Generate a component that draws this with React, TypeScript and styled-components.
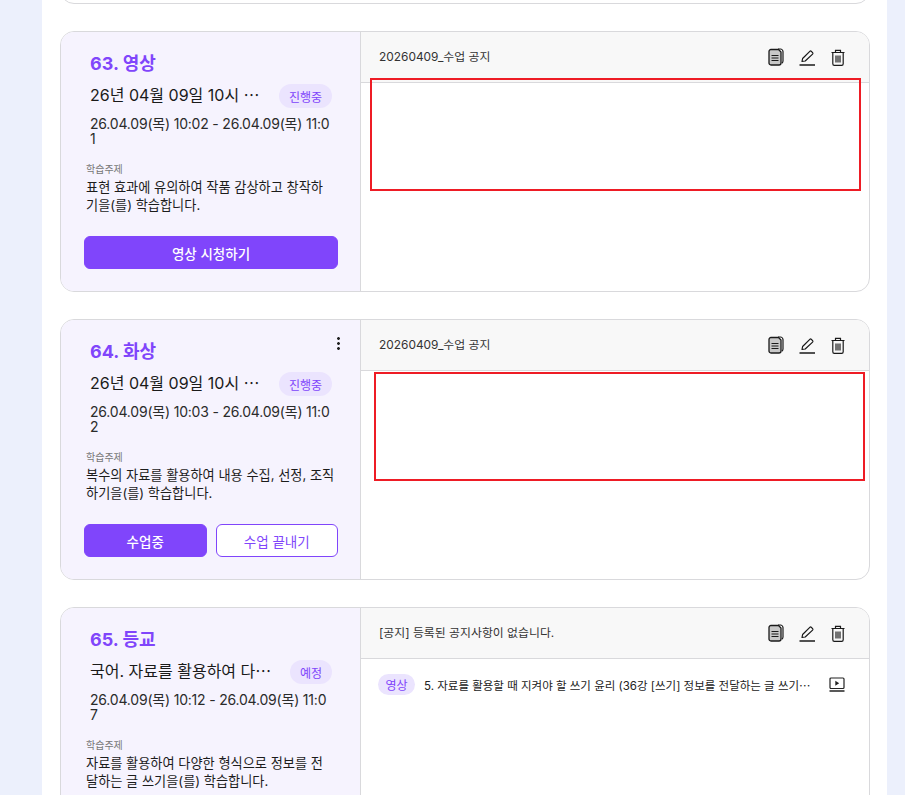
import React from "react";
import styled, { createGlobalStyle } from "styled-components";

const Global = createGlobalStyle`
  html, body {
    margin: 0;
    padding: 0;
    height: 795px;
    overflow: hidden;
    background: #ecf0fc;
    font-family: Inter, "Noto Sans CJK KR", sans-serif;
  }
  * { box-sizing: border-box; }
`;

const Page = styled.main`
  width: 845px;
  height: 795px;
  margin-left: 42px;
  background: #fff;
  padding: 0 18px;
  overflow: hidden;
`;

const List = styled.div`
  display: flex;
  flex-direction: column;
  gap: 27px;
  margin-top: -196px;
`;

const Card = styled.section<{ $h?: number }>`
  position: relative;
  display: grid;
  grid-template-columns: 300px 1fr;
  width: 810px;
  height: ${(p) => p.$h ?? 261}px;
  flex: none;
  border: 1px solid #d9d9dc;
  border-radius: 14px;
  overflow: hidden;
  background: #fff;
`;

const Side = styled.div`
  background: #f6f3fe;
  border-right: 1px solid #d9d9dc;
  padding: 19px 22px 0 23px;
  display: flex;
  flex-direction: column;
`;

const Title = styled.h2`
  margin: 0 0 0 6px;
  font-size: 18px;
  line-height: 26px;
  font-weight: 700;
  color: #8045fb;
`;

const NameRow = styled.div`
  display: flex;
  align-items: center;
  justify-content: space-between;
  margin: 7px 6px 0 6px;
  height: 24px;
`;

const Name = styled.div`
  flex: 1;
  min-width: 0;
  font-size: 16px;
  font-weight: 400;
  color: #1a1a1a;
  white-space: nowrap;
  padding-bottom: 4px;
`;

const Pill = styled.span`
  flex: none;
  display: inline-flex;
  align-items: center;
  justify-content: center;
  height: 24px;
  padding: 0 10px;
  border-radius: 12px;
  background: #ebe4fe;
  color: #8045fb;
  font-size: 12px;
  font-weight: 400;
`;

const Time = styled.div`
  margin: 8px 0 0 6px;
  width: 240px;
  font-size: 14px;
  line-height: 15px;
  letter-spacing: -0.2px;
  color: #2b2b2b;
  word-break: break-all;
`;

const TopicLabel = styled.div`
  margin: 16px 0 0 2px;
  font-size: 10px;
  line-height: 14px;
  color: #777;
`;

const Topic = styled.p`
  margin: 2px 0 0 2px;
  width: 249px;
  font-size: 13.2px;
  line-height: 18px;
  color: #1c1c1c;
  word-break: break-all;
`;

const Actions = styled.div`
  display: flex;
  gap: 9px;
  margin-top: 22px;
`;

const Button = styled.button<{ $outline?: boolean }>`
  flex: 1;
  height: 33px;
  border-radius: 6px;
  border: 1px solid #8045fb;
  background: ${(p) => (p.$outline ? "#fff" : "#8045fb")};
  color: ${(p) => (p.$outline ? "#8045fb" : "#fff")};
  font-family: inherit;
  font-size: 13.5px;
  font-weight: ${(p) => (p.$outline ? 400 : 500)};
  padding: 0;
`;

const Kebab = styled.span`
  position: absolute;
  top: 17px;
  left: 276px;
  width: 3px;
  height: 14px;
  background: radial-gradient(circle at 1.5px 1.5px, #222 1.3px, transparent 1.5px) 0 0 / 3px 5px repeat-y;
`;

const Main = styled.div`
  display: flex;
  flex-direction: column;
  min-width: 0;
`;

const NoticeBar = styled.header`
  display: flex;
  align-items: center;
  justify-content: space-between;
  height: 51px;
  flex: none;
  padding: 0 24px 0 18px;
  background: #f8f8f8;
  border-bottom: 1px solid #d9d9dc;
  font-size: 11.9px;
  color: #333;
`;

const NoticeText = styled.span`
  padding-bottom: 4px;
`;

const Tools = styled.div`
  display: flex;
  align-items: center;
  gap: 15px;
  color: #1a1a1a;
`;

const Lesson = styled.div`
  display: flex;
  align-items: center;
  padding: 15px 24px 0 17px;
  font-size: 11.5px;
  color: #222;
`;

const LessonPill = styled(Pill)`
  width: 37px;
  padding: 0;
  height: 21px;
  margin-right: 9px;
`;

const LessonText = styled.span`
  flex: 1;
  min-width: 0;
  white-space: nowrap;
`;

const RedBox = styled.div<{ $x: number; $y: number; $w: number; $h: number }>`
  position: absolute;
  left: ${(p) => p.$x}px;
  top: ${(p) => p.$y}px;
  width: ${(p) => p.$w}px;
  height: ${(p) => p.$h}px;
  border: 2px solid #ee1c25;
`;

function CopyIcon() {
  return (
    <svg width="16" height="18" viewBox="0 0 16 18" fill="none" stroke="currentColor">
      <path d="M10 1h2.5c1.2 0 2.5 1.3 2.5 2.5V13c0 1-.5 1.8-1.2 2.2" strokeWidth="1.2" />
      <path d="M3 1.5h7.500L13 4v11c0 1-.8 2-2 2H3c-1.200 0-2-1-2-2V3.500c0-1 .8-2 2-2z" fill="#c8c8c8" strokeWidth="1.300" />
      <path d="M3.500 7.500h7M3.500 10h7M3.500 12.500h7" strokeWidth="1.200" />
    </svg>
  );
}

function PenIcon() {
  return (
    <svg width="17" height="17" viewBox="0 0 17 17" fill="none" stroke="currentColor" strokeWidth="1.2">
      <path d="M3 12.500l.6-3L10.800 2.300a1 1 0 0 1 1.400 0l1.400 1.400a1 1 0 0 1 0 1.400L6.200 12z" strokeLinejoin="round" />
      <path d="M.5 16h15.500" strokeWidth="1.300" />
    </svg>
  );
}

function TrashIcon() {
  return (
    <svg width="14" height="17" viewBox="0 0 14 17" fill="none" stroke="currentColor" strokeWidth="1.2">
      <path d="M.5 3.500h13M4.500 3.500V1.300h5v2.200" />
      <path d="M1.800 3.500v11.200c0 .9.6 1.600 1.500 1.600h7.400c.9 0 1.500-.7 1.500-1.600V3.500" />
      <path d="M5 6.500v7M7 6.500v7M9 6.500v7" />
    </svg>
  );
}

function PlayIcon() {
  return (
    <svg width="16" height="15" viewBox="0 0 16 15" fill="none" stroke="currentColor" strokeWidth="1.2">
      <rect x="1" y="1" width="14" height="10.500" rx="1" />
      <path d="M6.300 3.800v5l3.900-2.500z" fill="currentColor" stroke="none" />
      <path d="M.5 14h15" strokeWidth="1.300" />
    </svg>
  );
}

type Item = {
  title: string;
  name: string;
  status: string;
  time: string;
  topic: string;
  notice: string;
  kebab?: boolean;
  actions?: string[];
  lesson?: string;
};

const items: Item[] = [
  {
    title: "63. 영상",
    name: "26년 04월 09일 10시 ⋯",
    status: "진행중",
    time: "26.04.09(목) 10:02 - 26.04.09(목) 11:01",
    topic: "표현 효과에 유의하여 작품 감상하고 창작하기을(를) 학습합니다.",
    notice: "20260409_수업 공지",
    actions: ["영상 시청하기"],
  },
  {
    title: "64. 화상",
    name: "26년 04월 09일 10시 ⋯",
    status: "진행중",
    time: "26.04.09(목) 10:03 - 26.04.09(목) 11:02",
    topic: "복수의 자료를 활용하여 내용 수집, 선정, 조직하기을(를) 학습합니다.",
    notice: "20260409_수업 공지",
    kebab: true,
    actions: ["수업중", "수업 끝내기"],
  },
  {
    title: "65. 등교",
    name: "국어. 자료를 활용하여 다⋯",
    status: "예정",
    time: "26.04.09(목) 10:12 - 26.04.09(목) 11:07",
    topic: "자료를 활용하여 다양한 형식으로 정보를 전달하는 글 쓰기을(를) 학습합니다.",
    notice: "[공지] 등록된 공지사항이 없습니다.",
    lesson: "5. 자료를 활용할 때 지켜야 할 쓰기 윤리 (36강 [쓰기] 정보를 전달하는 글 쓰기⋯",
  },
];

function LessonCard({ item, redBox }: { item: Item; redBox?: React.ReactNode }) {
  return (
    <Card>
      <Side>
        <Title>{item.title}</Title>
        <NameRow>
          <Name>{item.name}</Name>
          <Pill>{item.status}</Pill>
        </NameRow>
        <Time>{item.time}</Time>
        <TopicLabel>학습주제</TopicLabel>
        <Topic>{item.topic}</Topic>
        <Actions>
          {item.actions?.map((label, i) => (
            <Button key={label} $outline={i === 1}>
              {label}
            </Button>
          ))}
        </Actions>
      </Side>
      {item.kebab && <Kebab />}
      <Main>
        <NoticeBar>
          <NoticeText>{item.notice}</NoticeText>
          <Tools>
            <CopyIcon />
            <PenIcon />
            <TrashIcon />
          </Tools>
        </NoticeBar>
        {item.lesson && (
          <Lesson>
            <LessonPill>영상</LessonPill>
            <LessonText>{item.lesson}</LessonText>
            <PlayIcon />
          </Lesson>
        )}
      </Main>
      {redBox}
    </Card>
  );
}

export default function App() {
  return (
    <>
      <Global />
      <Page>
        <List>
          <Card $h={200} />
          <LessonCard item={items[0]} redBox={<RedBox $x={309} $y={46} $w={491} $h={113} />} />
          <LessonCard item={items[1]} redBox={<RedBox $x={313} $y={52} $w={491} $h={109} />} />
          <LessonCard item={items[2]} />
        </List>
      </Page>
    </>
  );
}
